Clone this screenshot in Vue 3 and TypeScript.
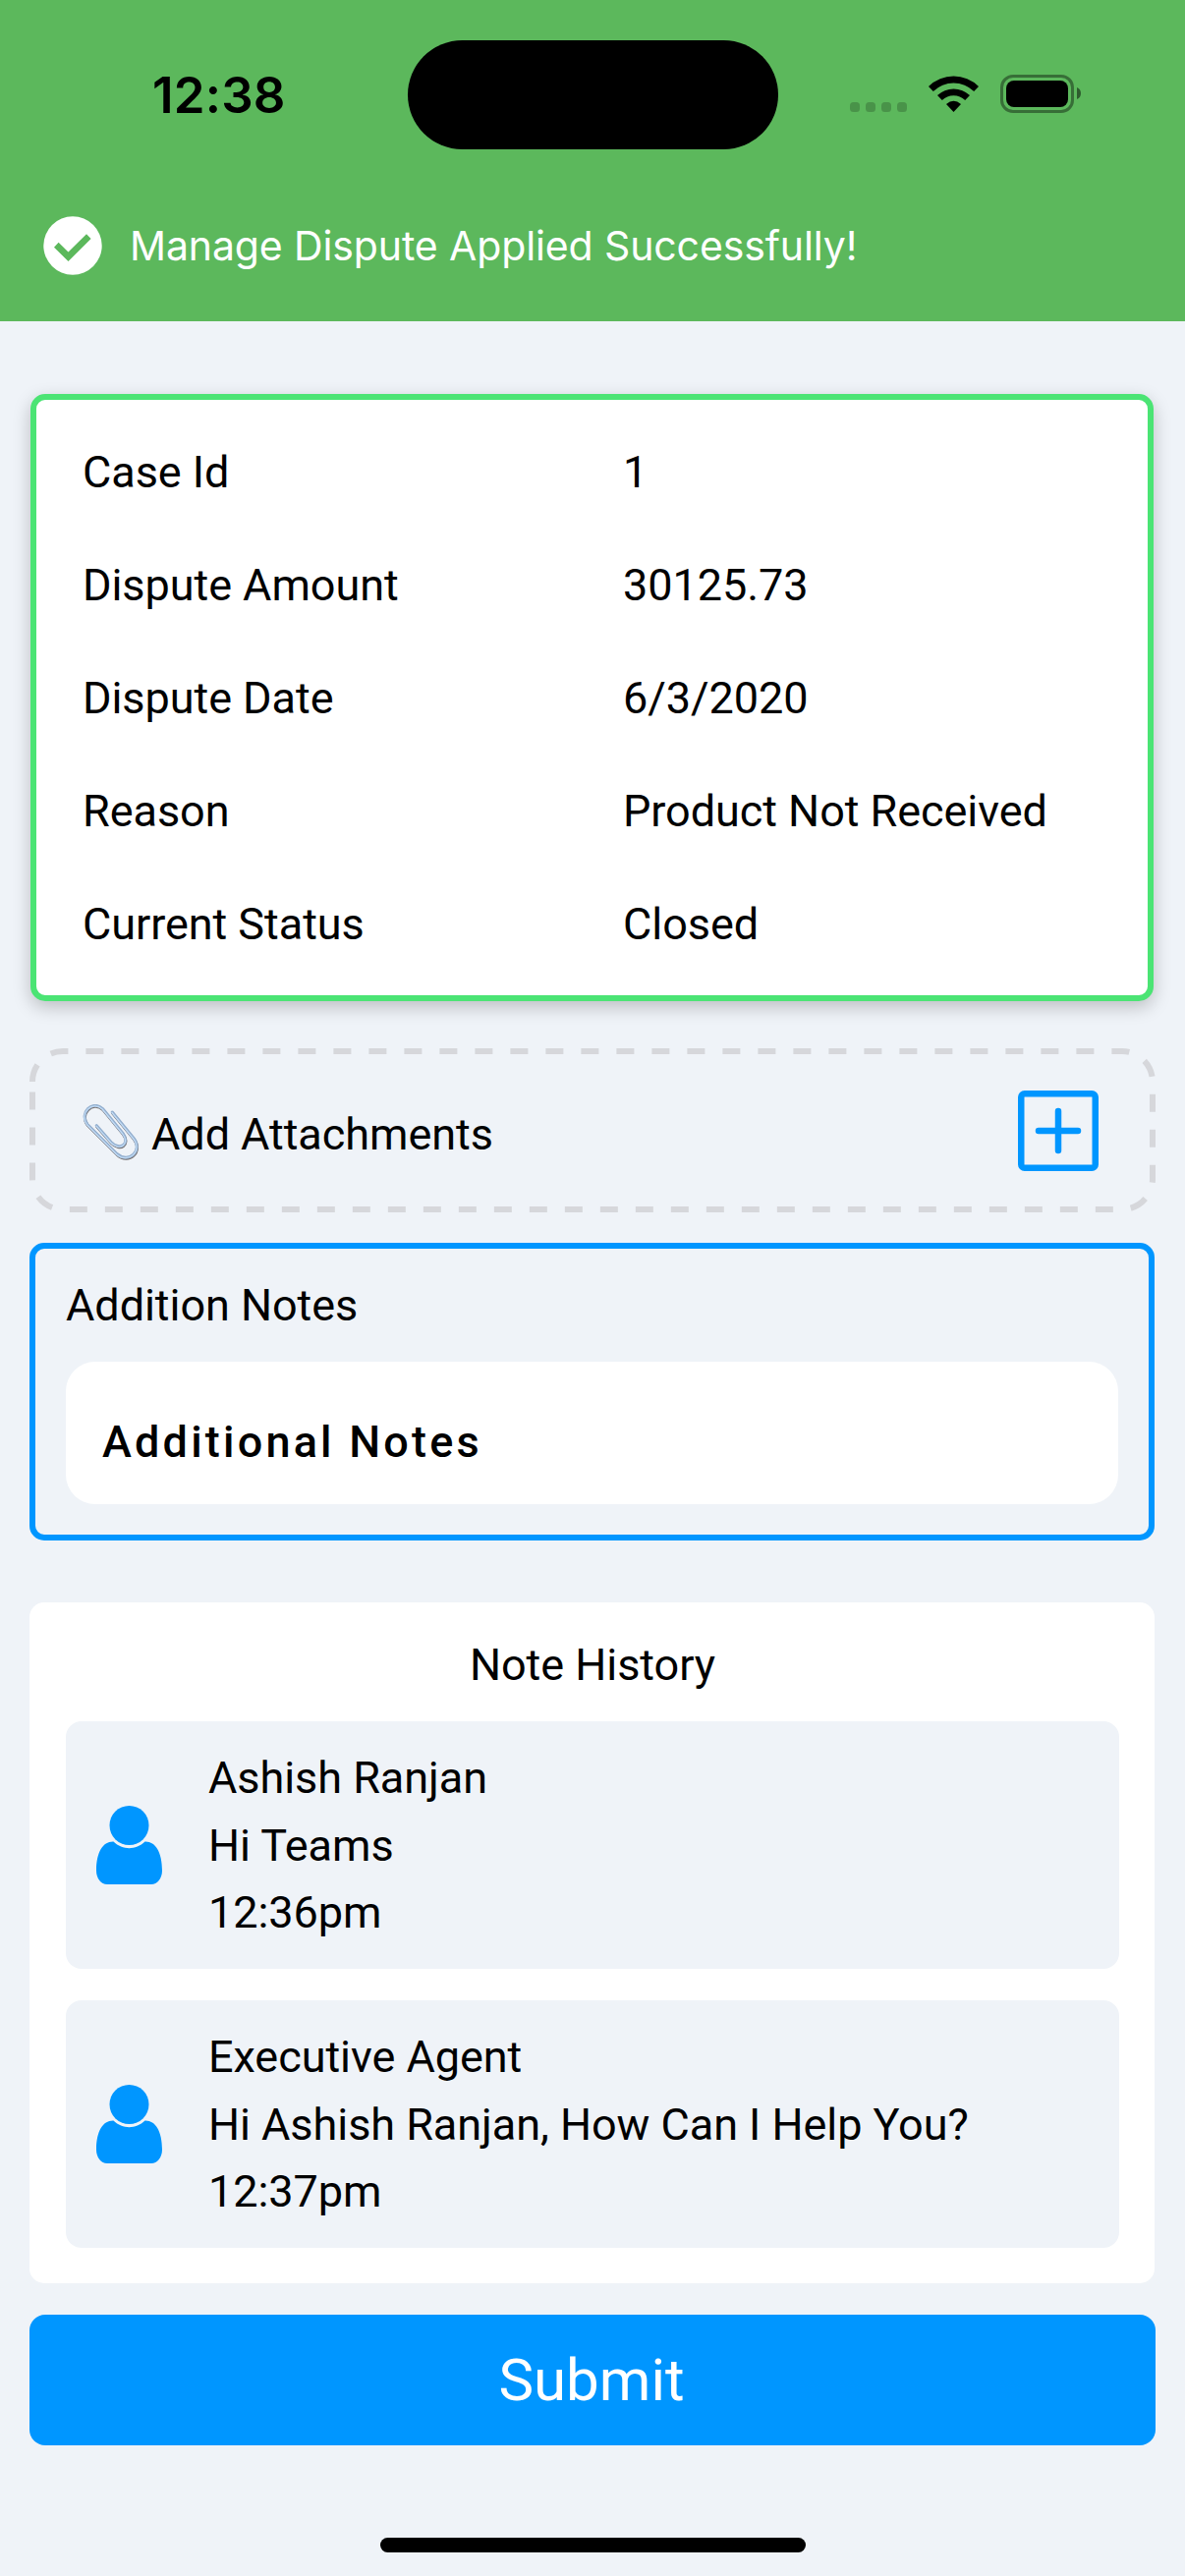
<script setup lang="ts">
interface Detail {
  label: string
  value: string
}

interface Note {
  author: string
  message: string
  time: string
}

const details: Detail[] = [
  { label: 'Case Id', value: '1' },
  { label: 'Dispute Amount', value: '30125.73' },
  { label: 'Dispute Date', value: '6/3/2020' },
  { label: 'Reason', value: 'Product Not Received' },
  { label: 'Current Status', value: 'Closed' },
]

const notes: Note[] = [
  { author: 'Ashish Ranjan', message: 'Hi Teams', time: '12:36pm' },
  { author: 'Executive Agent', message: 'Hi Ashish Ranjan, How Can I Help You?', time: '12:37pm' },
]

// One continuous wire, from the inner tip round to the outer tip
const clipPath =
  'M29.3 8 L51 34.500 C61 47 46 61 34 50.500 L4 20.500 C-5 9 9 -5 19.500 4.500 L40 29.500 C48 40 37 48 28 38.500 L13.300 21.700'
</script>

<template>
  <div class="screen">
    <header class="banner">
      <div class="status">
        <span class="clock">12:38</span>
        <div class="island"></div>
        <svg class="indicators" width="240" height="40" viewBox="0 0 240 40">
          <g fill="#000" fill-opacity="0.2">
            <rect x="5" y="28" width="10" height="10" rx="3.5" />
            <rect x="21" y="28" width="10" height="10" rx="3.5" />
            <rect x="37" y="28" width="10" height="10" rx="3.5" />
            <rect x="53" y="28" width="10" height="10" rx="3.5" />
          </g>
          <g fill="#000">
            <path d="M85 12 A36.500 36.500 0 0 1 136 12 L131.200 17 A29.500 29.500 0 0 0 89.800 17 Z" />
            <path d="M94 21 A24 24 0 0 1 127 21 L122.200 26 A17 17 0 0 0 98.800 26 Z" />
            <path d="M103 30 Q110.500 23.500 118 30 L110.500 38 Z" />
          </g>
          <rect x="159.500" y="1.500" width="72" height="36" rx="11.500" fill="none" stroke="#000" stroke-opacity="0.4" stroke-width="3" />
          <rect x="164" y="6" width="63" height="27" rx="8" fill="#000" />
          <path d="M236 13 Q240 14.500 240 19 Q240 23.500 236 25 Z" fill="#000" fill-opacity="0.5" />
        </svg>
      </div>
      <div class="toast">
        <svg class="toast-icon" width="60" height="60" viewBox="0 0 60 60">
          <circle cx="30" cy="30" r="29.700" fill="#fff" />
          <path d="M11 31.700 L15.600 26.800 L25.500 36.500 L44 18.300 L48.600 23 L25.500 46 Z" fill="#5cb85c" />
        </svg>
        <span class="toast-text">Manage Dispute Applied Successfully!</span>
      </div>
    </header>

    <main class="content">
      <section class="card">
        <div v-for="d in details" :key="d.label" class="row">
          <span class="label">{{ d.label }}</span>
          <span>{{ d.value }}</span>
        </div>
      </section>

      <section class="attach">
        <svg class="dashes" width="1146" height="167" viewBox="0 0 1146 167">
          <path
            d="M3 34 A31 31 0 0 1 34 3 H1112 A31 31 0 0 1 1143 34 V133 A31 31 0 0 1 1112 164 H34 A31 31 0 0 1 3 133 Z"
            fill="none" stroke="#d6d7db" stroke-width="6" stroke-dasharray="18 18" />
        </svg>
        <svg class="clip" width="58" height="60" viewBox="-1 0 58 60">
          <g fill="none" stroke-linecap="round" stroke-linejoin="round">
            <path :d="clipPath" transform="translate(0.300 1.100)" stroke="#77706f" stroke-width="2.800" />
            <path :d="clipPath" stroke="#93afcf" stroke-width="3" />
            <path :d="clipPath" transform="translate(-0.300 0.500)" stroke="#c3dcf5" stroke-width="1.200" />
          </g>
        </svg>
        <span class="attach-text">Add Attachments</span>
        <svg class="plus" width="82" height="82" viewBox="0 0 82 82" fill="none" stroke="#0096ff" stroke-width="6.500" stroke-linecap="round">
          <rect x="3.250" y="3.250" width="75.500" height="75.500" rx="3.500" />
          <path d="M21 41 H61 M41 21 V61" />
        </svg>
      </section>

      <section class="notes">
        <div class="notes-title">Addition Notes</div>
        <div class="field">Additional Notes</div>
      </section>

      <section class="history">
        <div class="history-title">Note History</div>
        <article v-for="n in notes" :key="n.time" class="note">
          <svg class="person" width="68" height="80" viewBox="0 0 68 80" fill="#0096ff">
            <circle cx="33.500" cy="20" r="20" />
            <path d="M17.500 36.500 C22 41 28 43.200 33.500 43.200 C39 43.200 45 41 49.500 36.500 C60 36 67 47 67 66 C67 74 62 80 56 80 H11 C5 80 0 74 0 66 C0 47 7 36 17.500 36.500 Z" />
          </svg>
          <div>
            <div class="line">{{ n.author }}</div>
            <div class="line">{{ n.message }}</div>
            <div class="line">{{ n.time }}</div>
          </div>
        </article>
      </section>

      <button class="submit" type="button">Submit</button>
    </main>
    <div class="home"></div>
  </div>
</template>

<style>
body {
  margin: 0;
  background: #eff3f8;
}
</style>

<style scoped>
.screen {
  box-sizing: border-box;
  width: 1206px;
  height: 2622px;
  display: flex;
  flex-direction: column;
  background: #eff3f8;
  color: #000;
  font-family: Roboto, "Liberation Sans", sans-serif;
  font-size: 45px;
  letter-spacing: -0.05px;
  overflow: hidden;
}
.banner {
  height: 327px;
  flex: none;
  background: #5cb85c;
}
.status {
  display: grid;
  grid-template-columns: 415px 377px 1fr;
  padding-top: 41px;
  height: 111px;
}
.clock {
  padding-left: 155px;
  font: 600 51px/111px Inter, sans-serif;
  letter-spacing: 0.2px;
}
.island {
  height: 111px;
  border-radius: 56px;
  background: #000;
}
.indicators {
  margin: 35px 0 0 68px;
}
.toast {
  display: flex;
  align-items: center;
  gap: 28px;
  margin-top: 68px;
  padding-left: 44px;
  height: 60px;
}
.toast-text {
  font: 400 41px/59px Inter, sans-serif;
  letter-spacing: -0.12px;
  color: #fff;
  white-space: nowrap;
}
.content {
  display: flex;
  flex-direction: column;
  padding: 74px 30px 0;
}
.card {
  box-sizing: border-box;
  margin: 0 2px 0 1px;
  height: 618px;
  padding: 16px 0 0 47px;
  border: 6px solid #4be474;
  border-radius: 15px;
  background: #fff;
  box-shadow: 0 6px 18px rgba(0, 0, 0, 0.22);
}
.row {
  display: grid;
  grid-template-columns: 550px 1fr;
  line-height: 115px;
  white-space: nowrap;
}
.attach {
  position: relative;
  display: flex;
  align-items: center;
  height: 167px;
  margin-top: 48px;
}
.dashes {
  position: absolute;
  inset: 0;
}
.clip {
  margin: 7px 0 0 54px;
}
.attach-text {
  margin: 8px auto 0 12px;
}
.plus {
  margin-right: 58px;
}
.notes {
  box-sizing: border-box;
  margin: 31px 1px 0 0;
  height: 303px;
  padding: 28px 31px 0;
  border: 6px solid #0096ff;
  border-radius: 15px;
}
.notes-title {
  line-height: 60px;
}
.field {
  margin-top: 27px;
  height: 145px;
  padding-left: 37px;
  border-radius: 30px;
  background: #fff;
  font-weight: 500;
  letter-spacing: 3.2px;
  line-height: 163px;
}
.history {
  box-sizing: border-box;
  margin: 63px 1px 0 0;
  height: 693px;
  padding: 34px 36px 0 37px;
  border-radius: 15px;
  background: #fff;
}
.history-title {
  line-height: 60px;
  text-align: center;
}
.note {
  box-sizing: border-box;
  display: flex;
  height: 252px;
  padding: 24px 0 0 31px;
  border-radius: 16px;
  background: #eff3f8;
}
.history-title + .note {
  margin-top: 27px;
}
.note + .note {
  margin-top: 32px;
}
.person {
  flex: none;
  margin: 62px 46px 0 0;
}
.line {
  line-height: 68.5px;
  white-space: nowrap;
}
.submit {
  height: 133px;
  margin-top: 32px;
  padding: 0 2px 0 0;
  border: 0;
  border-radius: 16px;
  background: #0096ff;
  color: #fff;
  font: 400 60px/131px Roboto, sans-serif;
}
.home {
  width: 433px;
  height: 15px;
  margin: 94px auto 0;
  border-radius: 8px;
  background: #000;
}
</style>
